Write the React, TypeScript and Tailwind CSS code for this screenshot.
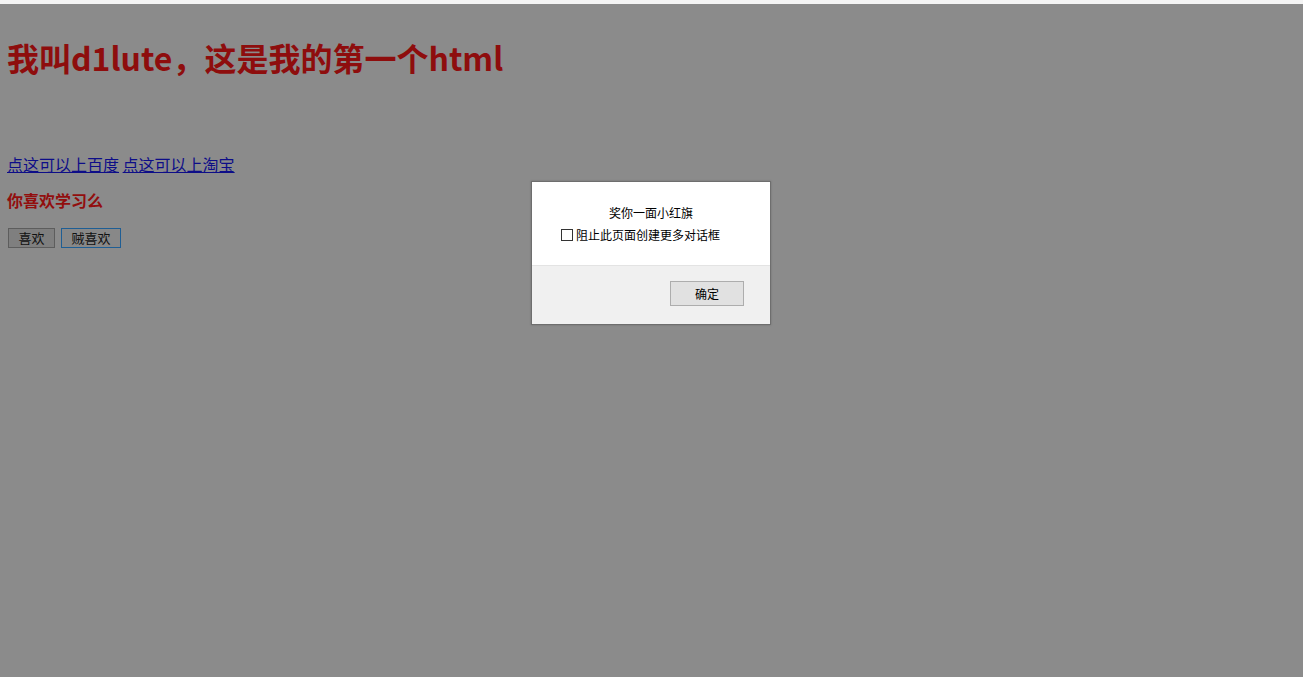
import React from "react";

export default function App() {
  return (
    <div className="relative w-[1303px] h-[677px] overflow-hidden bg-[#8b8b8b]">
      <div className="h-[4px] bg-[#f4f4f4]" />
      <div className="pl-[7px] font-['Noto_Sans_CJK_SC',sans-serif]">
        <h1 className="mt-[33px] text-[32px] leading-[40px] font-bold text-[#8e0d0d]">
          我叫d1lute，这是我的第一个html
        </h1>
        <div className="mt-[77px] text-[16px] leading-[20px] text-[#0d0d88]">
          <a className="underline" href="#">点这可以上百度</a>{" "}
          <a className="underline" href="#">点这可以上淘宝</a>
        </div>
        <div className="mt-[16px] text-[16px] leading-[20px] font-bold text-[#920e0e]">你喜欢学习么</div>
        <div className="mt-[18px] flex gap-[6px] pl-[1px]">
          <button className="h-[20px] w-[47px] border border-[#5d5d5d] bg-[#7f7f7f] text-[13px] leading-[18px] text-[#111]">喜欢</button>
          <button className="h-[20px] w-[60px] border border-[#1f5e94] bg-[#888888] text-[13px] leading-[18px] text-[#111]">贼喜欢</button>
        </div>
      </div>
      <div className="absolute left-[531px] top-[181px] w-[240px] h-[144px] border border-[#6e6e6e] bg-[#f0f0f0] flex flex-col font-['Noto_Sans_CJK_SC',sans-serif] text-[12px] text-black shadow-[0_0_2px_rgba(0,0,0,0.2)]">
        <div className="h-[84px] bg-white border-b border-[#e3e3e3] flex flex-col">
          <div className="mt-[23px] text-center leading-[16px]">奖你一面小红旗</div>
          <div className="mt-[6px] ml-[29px] flex items-center gap-[3px] leading-[16px]">
            <span className="w-[12px] h-[12px] border border-[#333] bg-white" />
            <span>阻止此页面创建更多对话框</span>
          </div>
        </div>
        <div className="flex justify-end pr-[26px] pt-[15px]">
          <button className="w-[74px] h-[25px] bg-[#e1e1e1] border border-[#adadad] text-[12px] leading-[23px]">确定</button>
        </div>
      </div>
    </div>
  );
}
